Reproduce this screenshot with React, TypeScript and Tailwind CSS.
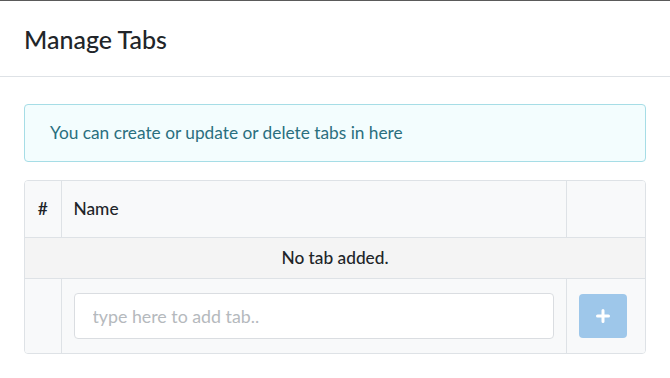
const ManageTabs = () => {
  const tabs: string[] = [];

  return (
    <div
      className="h-[378px] w-[670px] overflow-hidden border-t border-[#5a5a5a] bg-white text-[#212529]"
      style={{ fontFamily: "Lato, 'Noto Sans', sans-serif" }}
    >
      <div className="flex h-[76px] items-center border-b border-[#dee2e6] px-[24px]">
        <h5 className="pt-[1px] text-[25px] font-medium leading-none">Manage Tabs</h5>
      </div>

      <div className="px-[24px] pt-[27px]">
        <div className="flex h-[58px] items-center rounded-[4px] border border-[#a6dde6] bg-[#f3fdfe] px-[25px] text-[17.3px] text-[#2a6f7e]">
          You can create or update or delete tabs in here
        </div>

        <div className="mt-[18px] overflow-hidden rounded-[4px] border border-[#dee2e6]">
          <table className="w-full border-collapse text-[17.3px]">
            <thead>
              <tr className="h-[56px] bg-[#f8f9fa]">
                <th className="w-[36px] border-r border-[#dee2e6] text-center font-semibold">#</th>
                <th className="border-r border-[#dee2e6] pl-[12px] text-left font-medium">Name</th>
                <th className="w-[79px]"></th>
              </tr>
            </thead>
            <tbody>
              {tabs.length === 0 && (
                <tr className="h-[41px] border-t border-[#dee2e6] bg-[#f4f4f4]">
                  <td colSpan={3} className="text-center font-medium">
                    No tab added.
                  </td>
                </tr>
              )}
              <tr className="h-[75px] border-t border-[#dee2e6] bg-[#f8f9fa]">
                <td className="border-r border-[#dee2e6]"></td>
                <td className="border-r border-[#dee2e6] px-[12px]">
                  <input
                    type="text"
                    placeholder="type here to add tab.."
                    className="h-[46px] w-full rounded-[4px] border border-[#dadde1] bg-white px-[18px] text-[17.8px] placeholder:text-[#b5b9bd] focus:outline-none"
                  />
                </td>
                <td className="pl-[12px] text-left">
                  <button className="inline-flex h-[44px] w-[48px] items-center justify-center rounded-[4px] bg-[#9ec7ea] align-middle">
                    <svg width="14" height="14" viewBox="0 0 14 14">
                      <path d="M7 1.5v11M1.5 7h11" stroke="#ffffff" strokeWidth="3" strokeLinecap="round" />
                    </svg>
                  </button>
                </td>
              </tr>
            </tbody>
          </table>
        </div>
      </div>
    </div>
  );
};

export default function App() {
  return <ManageTabs />;
}
